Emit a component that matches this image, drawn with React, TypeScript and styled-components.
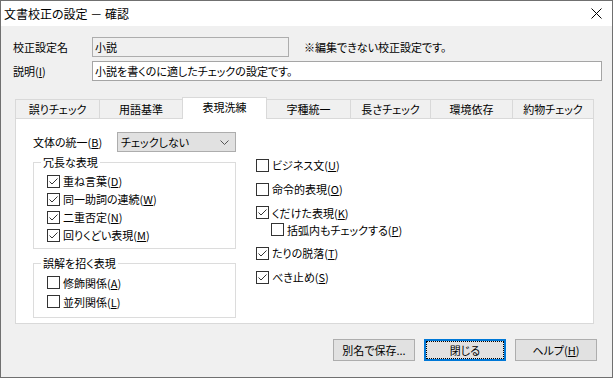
import React from "react";
import styled, { createGlobalStyle, css } from "styled-components";

const GlobalStyle = createGlobalStyle`
  html, body {
    margin: 0;
    padding: 0;
    background: #f0f0f0;
  }
  body {
    font-family: "Noto Sans CJK JP", "Noto Sans", sans-serif;
    font-size: 11px;
    font-feature-settings: "palt";
    color: #000;
  }
  * {
    box-sizing: border-box;
  }
`;

const Window = styled.div`
  width: 613px;
  height: 378px;
  border: 1px solid #707070;
  background: #f0f0f0;
  display: flex;
  flex-direction: column;
`;

const TitleBar = styled.div`
  height: 25px;
  background: #fff;
  display: flex;
  align-items: center;
  justify-content: space-between;
  padding-left: 3px;
  font-size: 12px;
`;

const CloseButton = styled.div`
  width: 30px;
  height: 25px;
  display: flex;
  align-items: center;
  justify-content: center;
  margin-right: 1px;
`;

const Body = styled.div`
  flex: 1;
  display: flex;
  flex-direction: column;
  padding: 11px 10px 0 12px;
`;

const FieldRow = styled.div`
  display: flex;
  align-items: center;
  height: 20px;
  & + & {
    margin-top: 4px;
  }
`;

const FieldLabel = styled.div`
  width: 79px;
`;

const ReadonlyBox = styled.div`
  width: 197px;
  height: 20px;
  border: 1px solid #adadad;
  background: #f0f0f0;
  padding: 0 2px;
  line-height: 18px;
`;

const TextBox = styled.div`
  flex: 1;
  height: 20px;
  border: 1px solid #a5a5a5;
  background: #fff;
  padding: 0 2px;
  line-height: 18px;
`;

const Note = styled.div`
  margin-left: 15px;
`;

const TabArea = styled.div`
  margin: 16px 0 0 2px;
  width: 579px;
  display: flex;
  flex-direction: column;
`;

const TabStrip = styled.div`
  display: flex;
  align-items: flex-end;
  height: 21px;
  position: relative;
  z-index: 1;
`;

const Tab = styled.div<{ $w: number; $active?: boolean }>`
  width: ${(p) => p.$w}px;
  height: 19px;
  border: 1px solid #d9d9d9;
  border-bottom: none;
  border-right: none;
  background: #f0f0f0;
  text-align: center;
  line-height: 19px;
  &:last-child {
    border-right: 1px solid #d9d9d9;
  }
  ${(p) =>
    p.$active &&
    css`
      height: 22px;
      margin-bottom: -1px;
      background: #fff;
      line-height: 19px;
      border-right: 1px solid #d9d9d9;
      & + * {
        border-left: none;
      }
    `}
`;

const Panel = styled.div`
  height: 206px;
  border: 1px solid #d9d9d9;
  background: #fff;
  display: flex;
  padding: 13px 0 0 17px;
  gap: 20px;
`;

const LeftCol = styled.div`
  width: 203px;
  display: flex;
  flex-direction: column;
`;

const RightCol = styled.div`
  display: flex;
  flex-direction: column;
  padding-top: 24px;
  gap: 6px;
`;

const StyleRow = styled.div`
  display: flex;
  align-items: center;
  height: 20px;
`;

const StyleLabel = styled.div`
  width: 84px;
`;

const Combo = styled.div`
  flex: 1;
  height: 20px;
  border: 1px solid #adadad;
  background: #e1e1e1;
  display: flex;
  align-items: center;
  justify-content: space-between;
  padding: 0 6px 0 3px;
`;

const Group = styled.fieldset<{ $loose?: boolean }>`
  margin: 3px 0 0 0;
  padding: 3px 0 4px 13px;
  border: 1px solid #dcdcdc;
  min-width: 0;
  ${(p) =>
    p.$loose &&
    css`
      margin-top: 7px;
      padding-bottom: 6px;
      & ${CheckRow} {
        height: 19px;
      }
    `}
`;

const GroupTitle = styled.legend`
  padding: 0 2px;
  margin-left: -6px;
  line-height: 14px;
`;

const CheckList = styled.div`
  display: flex;
  flex-direction: column;
`;

const CheckRow = styled.div<{ $indent?: boolean }>`
  display: flex;
  align-items: center;
  height: 18px;
  padding-left: ${(p) => (p.$indent ? "15px" : "0")};
`;

const Nested = styled.div`
  display: flex;
  flex-direction: column;
  & > ${CheckRow} {
    height: 17px;
  }
`;

const Box = styled.div`
  width: 13px;
  height: 13px;
  border: 1px solid #333;
  background: #fff;
  margin-right: 3px;
  display: flex;
  align-items: center;
  justify-content: center;
`;

const ButtonBar = styled.div`
  display: flex;
  justify-content: flex-end;
  gap: 9px;
  margin-top: 15px;
  padding-right: 5px;
`;

const Button = styled.div<{ $default?: boolean }>`
  width: 82px;
  height: 22px;
  border: 1px solid #adadad;
  background: #e1e1e1;
  display: flex;
  align-items: center;
  justify-content: center;
  ${(p) =>
    p.$default &&
    css`
      border: 2px solid #0078d7;
      & > span {
        border: 1px dotted #000;
        width: 100%;
        height: 100%;
        display: flex;
        align-items: center;
        justify-content: center;
      }
    `}
`;

const Check = ({ on, children, indent }: { on?: boolean; children: React.ReactNode; indent?: boolean }) => (
  <CheckRow $indent={indent}>
    <Box>
      {on && (
        <svg width="11" height="11" viewBox="0 0 11 11">
          <polyline points="1.5,5.5 4,8 9.5,2.5" fill="none" stroke="#333" strokeWidth="1" />
        </svg>
      )}
    </Box>
    <span>{children}</span>
  </CheckRow>
);

const tabs: [string, number][] = [
  ["誤りチェック", 84],
  ["用語基準", 83],
  ["表現洗練", 85],
  ["字種統一", 83],
  ["長さチェック", 80],
  ["環境依存", 82],
  ["約物チェック", 82],
];

export default function App() {
  return (
    <>
      <GlobalStyle />
      <Window>
        <TitleBar>
          <span>文書校正の設定 － 確認</span>
          <CloseButton>
            <svg width="11" height="11" viewBox="0 0 11 11">
              <path d="M0.5 0.5 L10.5 10.5 M10.5 0.5 L0.5 10.5" stroke="#000" strokeWidth="1" />
            </svg>
          </CloseButton>
        </TitleBar>
        <Body>
          <FieldRow>
            <FieldLabel>校正設定名</FieldLabel>
            <ReadonlyBox>小説</ReadonlyBox>
            <Note>※編集できない校正設定です。</Note>
          </FieldRow>
          <FieldRow>
            <FieldLabel>
              説明(<u>I</u>)
            </FieldLabel>
            <TextBox>小説を書くのに適したチェックの設定です。</TextBox>
          </FieldRow>
          <TabArea>
            <TabStrip>
              {tabs.map(([t, w]) => (
                <Tab key={t} $w={w} $active={t === "表現洗練"}>
                  {t}
                </Tab>
              ))}
            </TabStrip>
            <Panel>
              <LeftCol>
                <StyleRow>
                  <StyleLabel>
                    文体の統一(<u>B</u>)
                  </StyleLabel>
                  <Combo>
                    <span>チェックしない</span>
                    <svg width="9" height="5" viewBox="0 0 9 5">
                      <polyline points="0.5,0.5 4.5,4.5 8.5,0.5" fill="none" stroke="#555" strokeWidth="1" />
                    </svg>
                  </Combo>
                </StyleRow>
                <Group>
                  <GroupTitle>冗長な表現</GroupTitle>
                  <CheckList>
                    <Check on>
                      重ね言葉(<u>D</u>)
                    </Check>
                    <Check on>
                      同一助詞の連続(<u>W</u>)
                    </Check>
                    <Check on>
                      二重否定(<u>N</u>)
                    </Check>
                    <Check on>
                      回りくどい表現(<u>M</u>)
                    </Check>
                  </CheckList>
                </Group>
                <Group $loose>
                  <GroupTitle>誤解を招く表現</GroupTitle>
                  <CheckList>
                    <Check>
                      修飾関係(<u>A</u>)
                    </Check>
                    <Check>
                      並列関係(<u>L</u>)
                    </Check>
                  </CheckList>
                </Group>
              </LeftCol>
              <RightCol>
                <Check>
                  ビジネス文(<u>U</u>)
                </Check>
                <Check>
                  命令的表現(<u>O</u>)
                </Check>
                <Nested>
                  <Check on>
                    くだけた表現(<u>K</u>)
                  </Check>
                  <Check indent>
                    括弧内もチェックする(<u>P</u>)
                  </Check>
                </Nested>
                <Check on>
                  たりの脱落(<u>T</u>)
                </Check>
                <Check on>
                  べき止め(<u>S</u>)
                </Check>
              </RightCol>
            </Panel>
          </TabArea>
          <ButtonBar>
            <Button>別名で保存...</Button>
            <Button $default>
              <span>閉じる</span>
            </Button>
            <Button>
              ヘルプ(<u>H</u>)
            </Button>
          </ButtonBar>
        </Body>
      </Window>
    </>
  );
}
